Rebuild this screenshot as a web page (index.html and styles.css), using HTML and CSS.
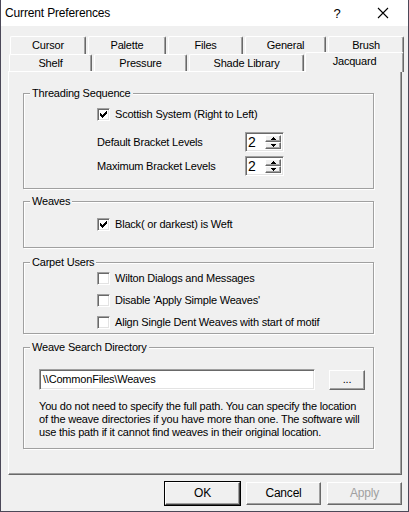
FILE: index.html
```html
<!DOCTYPE html>
<html>
<head>
<meta charset="utf-8">
<link rel="stylesheet" href="styles.css">
</head>
<body>
<div class="win">
  <div class="titlebar">
    <span class="title">Current Preferences</span>
    <span class="help">?</span>
    <span class="close"><svg width="12" height="12" viewBox="0 0 12 12"><path d="M1 1 L11 11 M11 1 L1 11" stroke="#000" stroke-width="1.1" fill="none"/></svg></span>
  </div>
  <div class="body">
    <div class="tabs">
      <div class="tabrow back">
        <div class="tab w-cursor">Cursor</div>
        <div class="tab w-palette">Palette</div>
        <div class="tab w-files">Files</div>
        <div class="tab w-general">General</div>
        <div class="tab w-brush">Brush</div>
      </div>
      <div class="tabrow front">
        <div class="tab w-shelf">Shelf</div>
        <div class="tab w-pressure">Pressure</div>
        <div class="tab w-shade">Shade Library</div>
        <div class="tab w-jacq active">Jacquard</div>
      </div>
    </div>
    <div class="panel">
      <div class="group g-thread">
        <span class="legend">Threading Sequence</span>
        <div class="row"><span class="cb checked"><svg width="7" height="7" viewBox="0 0 7 7" shape-rendering="crispEdges"><path d="M0 2h1v1h1v1h1v-1h1v-1h1v-1h1v-1h1v3h-1v1h-1v1h-1v1h-1v1h-1v-1h-1v-1h-1z" fill="#000"/></svg></span><span class="lbl">Scottish System (Right to Left)</span></div>
        <div class="row spin-row"><span class="slbl">Default Bracket Levels</span><span class="spin"><span class="sval">2</span><span class="sbtns"><span class="sb"><svg width="5" height="3" viewBox="0 0 5 3" shape-rendering="crispEdges"><path d="M2 0h1v1h1v1h1v1h-5v-1h1v-1h1z" fill="#000"/></svg></span><span class="sb"><svg width="5" height="3" viewBox="0 0 5 3" shape-rendering="crispEdges"><path d="M0 0h5v1h-1v1h-1v1h-1v-1h-1v-1h-1z" fill="#000"/></svg></span></span></span></div>
        <div class="row spin-row r3"><span class="slbl">Maximum Bracket Levels</span><span class="spin"><span class="sval">2</span><span class="sbtns"><span class="sb"><svg width="5" height="3" viewBox="0 0 5 3" shape-rendering="crispEdges"><path d="M2 0h1v1h1v1h1v1h-5v-1h1v-1h1z" fill="#000"/></svg></span><span class="sb"><svg width="5" height="3" viewBox="0 0 5 3" shape-rendering="crispEdges"><path d="M0 0h5v1h-1v1h-1v1h-1v-1h-1v-1h-1z" fill="#000"/></svg></span></span></span></div>
      </div>
      <div class="group g-weaves">
        <span class="legend">Weaves</span>
        <div class="row"><span class="cb checked"><svg width="7" height="7" viewBox="0 0 7 7" shape-rendering="crispEdges"><path d="M0 2h1v1h1v1h1v-1h1v-1h1v-1h1v-1h1v3h-1v1h-1v1h-1v1h-1v1h-1v-1h-1v-1h-1z" fill="#000"/></svg></span><span class="lbl">Black( or darkest) is Weft</span></div>
      </div>
      <div class="group g-carpet">
        <span class="legend">Carpet Users</span>
        <div class="row"><span class="cb"></span><span class="lbl">Wilton Dialogs and Messages</span></div>
        <div class="row"><span class="cb"></span><span class="lbl">Disable 'Apply Simple Weaves'</span></div>
        <div class="row"><span class="cb"></span><span class="lbl">Align Single Dent Weaves with start of motif</span></div>
      </div>
      <div class="group g-dir">
        <span class="legend">Weave Search Directory</span>
        <div class="dir-row">
          <div class="input">\\CommonFiles\Weaves</div>
          <div class="btn small">...</div>
        </div>
        <p class="note">You do not need to specify the full path. You can specify the location<br>of the weave directories if you have more than one. The software will<br>use this path if it cannot find weaves in their original location.</p>
      </div>
    </div>
    <div class="buttons">
      <div class="btn default">OK</div>
      <div class="btn">Cancel</div>
      <div class="btn disabled">Apply</div>
    </div>
  </div>
</div>
</body>
</html>
```

FILE: styles.css
```css
* { box-sizing: border-box; }
html, body { margin: 0; padding: 0; background: #f0f0f0; }
body { width: 409px; height: 512px; overflow: hidden; font-family: "Liberation Sans", Arial, sans-serif; font-size: 11px; letter-spacing: -0.2px; color: #000; }

.win {
  width: 409px; height: 512px;
  border-left: 1px solid #4b4858;
  border-right: 1px solid #4b4858;
  border-bottom: 1px solid #4b4858;
  background: #f0f0f0;
  display: flex; flex-direction: column;
}
.titlebar {
  height: 26px; background: #fff; display: flex; align-items: center;
  flex: none;
}
.title { font-size: 12px; letter-spacing: -0.15px; margin-left: 4px; flex: 1; }
.help { font-size: 13px; width: 46px; text-align: center; }
.close { width: 46px; display: flex; justify-content: center; align-items: center; margin-right: 2px; }

.body { padding: 10px 0 0 7px; flex: 1; display: flex; flex-direction: column; }

.tabs { height: 35px; position: relative; z-index: 2; }
.tabrow { display: flex; }
.tabrow.back { height: 18px; margin-left: 2px; gap: 2px; }
.tabrow.front { height: 17px; margin-left: 1px; gap: 2px; }
.tab {
  height: 100%;
  border-top: 1px solid #fff; border-left: 1px solid #fff;
  border-right: 1px solid #696969;
  box-shadow: inset -1px 0 0 #a0a0a0;
  border-radius: 2px 2px 0 0;
  text-align: center; line-height: 16px;
  background: #f0f0f0;
}
.tab.active { height: 20px; margin-top: -2px; line-height: 16px; }
.w-cursor { width: 76px; } .w-palette { width: 78px; } .w-files { width: 75px; } .w-general { width: 81px; } .w-brush { width: 76px; }
.w-shelf { width: 83px; } .w-pressure { width: 93px; } .w-shade { width: 115px; }
.w-jacq { width: 99px; margin-left: -1px; }

.panel {
  width: 394px; height: 404px;
  border-top: 1px solid #fff; border-left: 1px solid #fff;
  border-right: 1px solid #696969; border-bottom: 1px solid #696969;
  box-shadow: inset -1px -1px 0 #a0a0a0;
  padding: 21px 0 0 14px;
  position: relative; z-index: 1;
}
.group {
  width: 351px; position: relative;
  border: 1px solid #a0a0a0;
  box-shadow: 1px 1px 0 #fff, inset 1px 1px 0 #fff;
  display: flex; flex-direction: column;
}
.legend { position: absolute; top: -7px; left: 6px; background: #f0f0f0; padding: 0 2px; line-height: 13px; }
.g-thread { height: 96px; padding: 13px 0 0 73px; }
.g-weaves { height: 47px; margin-top: 12px; padding: 15px 0 0 73px; }
.g-carpet { height: 72px; margin-top: 14px; padding: 8px 0 0 73px; gap: 8px; }
.g-dir { height: 102px; margin-top: 13px; padding: 21px 0 0 15px; }

.row { display: flex; align-items: center; height: 14px; }
.spin-row { height: 20px; margin-top: 11px; }
.spin-row.r3 { margin-top: 4px; }
.slbl { width: 148px; }
.lbl { margin-left: 5px; }

.cb {
  width: 13px; height: 13px; flex: none; background: #fff;
  border: 1px solid; border-color: #a0a0a0 #fff #fff #a0a0a0;
  box-shadow: inset 1px 1px 0 #696969, inset -1px -1px 0 #e3e3e3;
  display: flex; align-items: center; justify-content: center;
}

.spin {
  width: 39px; height: 20px; background: #fff; display: flex;
  border: 1px solid; border-color: #a0a0a0 #fff #fff #a0a0a0;
  box-shadow: inset 1px 1px 0 #696969, inset -1px -1px 0 #e3e3e3;
  padding: 2px;
}
.sval { flex: 1; font-size: 14px; line-height: 15px; }
.sbtns { width: 16px; display: flex; flex-direction: column; }
.sb {
  flex: 1; background: #f0f0f0;
  border: 1px solid; border-color: #fff #696969 #696969 #fff;
  box-shadow: inset -1px -1px 0 #a0a0a0;
  display: flex; align-items: center; justify-content: center;
}

.dir-row { display: flex; align-items: center; height: 21px; }
.input {
  width: 276px; height: 21px; background: #fff;
  border: 1px solid; border-color: #a0a0a0 #fff #fff #a0a0a0;
  box-shadow: inset 1px 1px 0 #696969, inset -1px -1px 0 #e3e3e3;
  padding: 2px 3px; line-height: 15px;
}
.btn {
  width: 75px; height: 23px; background: #f0f0f0;
  border: 1px solid; border-color: #fff #696969 #696969 #fff;
  box-shadow: inset -1px -1px 0 #a0a0a0;
  text-align: center; line-height: 20px; font-size: 12px;
}
.btn.small { width: 36px; height: 20px; margin-left: 14px; line-height: 17px; font-size: 11px; }
.btn.default { outline: 1px solid #000; border-color: #fff #404040 #404040 #fff; }
.btn.disabled { color: #a0a0a0; }
.note { margin: 10px 0 0 0; line-height: 13px; white-space: nowrap; }

.buttons { display: flex; gap: 6px; justify-content: flex-end; margin-top: 7px; width: 394px; }
```
